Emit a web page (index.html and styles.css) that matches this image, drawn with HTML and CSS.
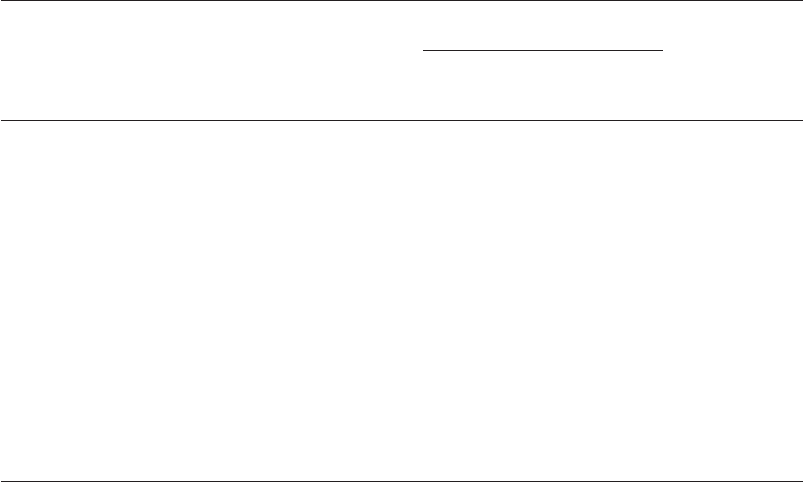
FILE: index.html
```html
<!DOCTYPE html>
<html lang="en">
<head>
  <meta charset="UTF-8" />
  <meta name="viewport" content="width=device-width, initial-scale=1" />
  <title>Form</title>
  <link rel="stylesheet" href="styles.css">
</head>
<body>
  <div class="sheet">
    <div class="sheet-head">
      <div class="sign-line"></div>
    </div>
    <div class="sheet-body"></div>
  </div>
</body>
</html>
```

FILE: styles.css
```css
* {
  margin: 0;
  padding: 0;
  box-sizing: border-box;
}
body {
  font-family: 'Liberation Sans', sans-serif;
  background: #fff;
  color: #231f20;
}
.sheet {
  display: flex;
  flex-direction: column;
  height: 483px;
  padding-left: 1px;
}
.sheet-head {
  height: 121px;
  border-top: 1px solid #231f20;
  border-bottom: 1px solid #231f20;
  padding-top: 49px;
  padding-left: 422px;
}
.sign-line {
  width: 240px;
  border-bottom: 1px solid #231f20;
}
.sheet-body {
  height: 361px;
  border-bottom: 1px solid #231f20;
}
```
